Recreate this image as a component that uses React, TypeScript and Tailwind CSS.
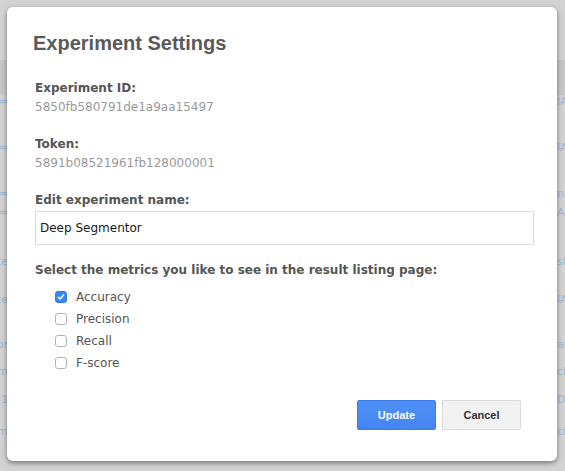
import React, { useState } from 'react';

const rows = [
    { mt: 'mt-0', left: 'name=', right: 'lAB' },
    { mt: 'mt-[32px]', left: 'name=', right: 'lAB' },
    { mt: 'mt-[32px]', left: 'name=', right: 'nn' },
    { mt: 'mt-[5px]', left: 'name=', right: 'AB' },
    { mt: 'mt-[35px]', left: 'state', right: 'sNA' },
    { mt: 'mt-[24px]', left: 'state', right: 'lAB' },
    { mt: 'mt-[31px]', left: 'color', right: 'ate' },
    { mt: 'mt-[13px]', left: 'item', right: 'cle' },
    { mt: 'mt-[14px]', left: 'id=1', right: 'D' },
    { mt: 'mt-[18px]', left: 'item', right: 'cle' },
];

const metricsList = ['Accuracy', 'Precision', 'Recall', 'F-score'];

const Checkbox = ({ checked }: { checked: boolean }) => (
    checked ? (
        <span className="w-[12px] h-[12px] rounded-[3px] bg-[#3b86f5] border border-[#2f78e6] flex items-center justify-center shrink-0">
            <svg width="8" height="8" viewBox="0 0 8 8"><polyline points="1.3,4.2 3.2,6 6.7,1.8" fill="none" stroke="#fff" strokeWidth="1.4" strokeLinecap="round" strokeLinejoin="round" /></svg>
        </span>
    ) : (
        <span className="w-[12px] h-[12px] rounded-[3px] bg-white border border-[#b3b3b3] shrink-0" />
    )
);

export default function App() {
    const [name, setName] = useState('Deep Segmentor');
    const [metrics, setMetrics] = useState<string[]>(['Accuracy']);

    const toggle = (m: string) => setMetrics(prev => prev.includes(m) ? prev.filter(x => x !== m) : [...prev, m]);

    return (
        <div className="relative w-[565px] h-[471px] overflow-hidden bg-[#d2d2d2] font-['DejaVu_Sans',sans-serif]">
            {/* page behind the overlay */}
            <div className="h-[60px]" />
            <div className="h-[35px] bg-[#c5c5c5]" />
            <div className="flex flex-col text-[11px] leading-[14px] text-[#98b5d3]">
                {rows.map((r, i) => (
                    <div key={i} className={`${r.mt} h-[14px] flex`}>
                        <div className="w-[8px] overflow-hidden flex justify-end whitespace-nowrap">{r.left}</div>
                        <div className="ml-auto w-[8px] overflow-hidden whitespace-nowrap">{r.right}</div>
                    </div>
                ))}
            </div>

            {/* modal */}
            <div className="absolute left-[7px] top-[7px] w-[550px] h-[454px] bg-white rounded-[6px] shadow-[0_2px_5px_rgba(0,0,0,0.45)] pt-[24px] pl-[28px] pr-[23px] flex flex-col">
                <h2 className="-ml-[2px] text-[20px] leading-[24px] font-bold text-[#5a5a5a] font-['Liberation_Sans',sans-serif]">Experiment Settings</h2>

                <div className="mt-[24px] text-[12px] leading-[19px] font-bold text-[#555]">Experiment ID:</div>
                <div className="text-[12px] leading-[19px] text-[#9a9a9a]">5850fb580791de1a9aa15497</div>

                <div className="mt-[18px] text-[12px] leading-[19px] font-bold text-[#555]">Token:</div>
                <div className="text-[12px] leading-[19px] text-[#9a9a9a]">5891b08521961fb128000001</div>

                <div className="mt-[18px] text-[12px] leading-[19px] font-bold text-[#555]">Edit experiment name:</div>
                <input
                    value={name}
                    onChange={e => setName(e.target.value)}
                    className="mt-[1px] w-[499px] h-[34px] border border-[#dcdcdc] px-[4px] text-[12px] text-[#1a1a1a] outline-none"
                />

                <div className="mt-[16px] text-[12px] leading-[19px] font-bold text-[#555]">Select the metrics you like to see in the result listing page:</div>
                <div className="mt-[6px] pl-[20px] flex flex-col">
                    {metricsList.map(m => (
                        <label key={m} onClick={() => toggle(m)} className="h-[22px] flex items-center gap-[9px] cursor-pointer">
                            <Checkbox checked={metrics.includes(m)} />
                            <span className="text-[12px] text-[#555]">{m}</span>
                        </label>
                    ))}
                </div>

                <div className="mt-[26px] pr-[13px] flex justify-end gap-[6px] font-['Liberation_Sans',sans-serif] text-[11px] font-bold">
                    <button className="w-[79px] h-[30px] rounded-[2px] border border-[#3a7be6] bg-gradient-to-b from-[#4f90f7] to-[#4485f3] text-white">Update</button>
                    <button className="w-[79px] h-[30px] rounded-[2px] border border-[#dadada] bg-[#f2f2f2] text-[#333]">Cancel</button>
                </div>
            </div>
        </div>
    );
}
